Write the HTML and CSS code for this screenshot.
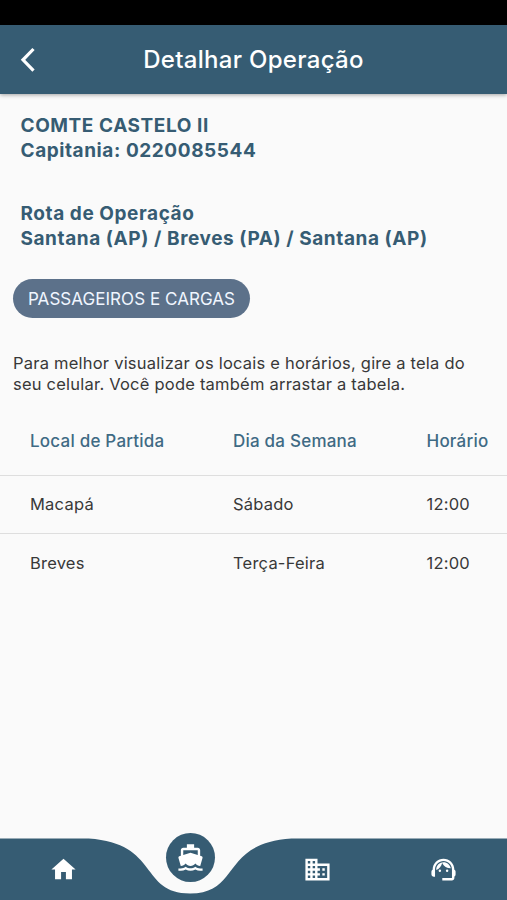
FILE: index.html
```html
<!DOCTYPE html>
<html lang="pt-BR">
<head>
    <meta charset="utf-8">
    <title>Detalhar Operação</title>
    <link rel="stylesheet" href="styles.css">
</head>
<body>
    <div class="status-bar"></div>
    <header class="app-bar">
        <svg class="back" viewBox="0 0 16 26"><path d="M13.5 2 L3 12.8 L13.5 23.6"/></svg>
        <h1>Detalhar Operação</h1>
    </header>
    <main>
        <section class="info">
            <p>COMTE CASTELO II</p>
            <p>Capitania: 0220085544</p>
        </section>
        <section class="info route">
            <p>Rota de Operação</p>
            <p>Santana (AP) / Breves (PA) / Santana (AP)</p>
        </section>
        <div class="chip">PASSAGEIROS E CARGAS</div>
        <p class="hint">Para melhor visualizar os locais e horários, gire a tela do<br>seu celular. Você pode também arrastar a tabela.</p>
        <table>
            <thead>
                <tr><th>Local de Partida</th><th>Dia da Semana</th><th>Horário</th></tr>
            </thead>
            <tbody>
                <tr><td>Macapá</td><td>Sábado</td><td>12:00</td></tr>
                <tr><td>Breves</td><td>Terça-Feira</td><td>12:00</td></tr>
            </tbody>
        </table>
    </main>
    <nav class="bottom-nav">
        <svg class="nav-shape" viewBox="0 0 507 62">
            <path d="M0 .5H88.7C159.7 5.1 139.4 55.5 190.1 55.5S220.5 5.1 291.5 .5H507V62H0Z"/>
        </svg>
        <a href="#"><svg viewBox="0 0 24 24"><path d="M10 20v-6h4v6h5v-8h3L12 3 2 12h3v8z"/></svg></a>
        <a href="#" class="active"><svg viewBox="0 0 24 24"><path d="M20 21c-1.39 0-2.78-.47-4-1.32-2.44 1.71-5.56 1.71-8 0C6.78 20.53 5.39 21 4 21H2v2h2c1.38 0 2.74-.35 4-.99 2.52 1.29 5.48 1.29 8 0 1.26.65 2.62.99 4 .99h2v-2h-2zM3.95 19H4c1.6 0 3.02-.88 4-2 .98 1.12 2.4 2 4 2s3.02-.88 4-2c.98 1.12 2.4 2 4 2h.05l1.89-6.68c.08-.26.06-.54-.06-.78s-.34-.42-.6-.5L20 10.62V6c0-1.1-.9-2-2-2h-3V1H9v3H6c-1.1 0-2 .9-2 2v4.62l-1.29.42c-.26.08-.48.26-.6.5s-.15.52-.06.78L3.95 19zM6 6h12v3.97L12 8 6 9.97V6z"/></svg></a>
        <a href="#"><svg viewBox="0 0 24 24"><path d="M12 7V3H2v18h20V7H12zM6 19H4v-2h2v2zm0-4H4v-2h2v2zm0-4H4V9h2v2zm0-4H4V5h2v2zm4 12H8v-2h2v2zm0-4H8v-2h2v2zm0-4H8V9h2v2zm0-4H8V5h2v2zm10 12h-8v-2h2v-2h-2v-2h2v-2h-2V9h8v10zm-2-8h-2v2h2v-2zm0 4h-2v2h2v-2z"/></svg></a>
        <a href="#"><svg viewBox="0 0 24 24"><path d="M21 12.22C21 6.73 16.74 3 12 3c-4.69 0-9 3.65-9 9.28-.6.34-1 .98-1 1.72v2c0 1.1.9 2 2 2h1v-6.1c0-3.87 3.13-7 7-7s7 3.13 7 7V19h-8v2h8c1.1 0 2-.9 2-2v-1.22c.59-.31 1-.92 1-1.64v-2.3c0-.7-.41-1.31-1-1.62z"/><circle cx="9" cy="13" r="1"/><circle cx="15" cy="13" r="1"/><path d="M18 11.03C17.52 8.18 15.04 6 12.05 6c-3.03 0-6.29 2.51-6.03 6.45 2.47-1.01 4.33-3.21 4.86-5.89 1.31 2.63 4 4.44 7.12 4.47z"/></svg></a>
    </nav>
</body>
</html>
```
FILE: styles.css
```css
* {
    box-sizing: border-box;
}
body {
    display: flex;
    flex-direction: column;
    height: 100vh;
    margin: 0;
    overflow: hidden;
    font-family: Inter, "Liberation Sans", sans-serif;
    background-color: #fafafa;
    color: #383838;
}
h1,
p {
    margin: 0;
}
.status-bar {
    height: 25px;
    background: #000;
}
.app-bar {
    display: grid;
    grid-template-columns: 56px 1fr 56px;
    align-items: center;
    height: 69px;
    background: #365c73;
    color: #fff;
    box-shadow: 0 1px 4px rgba(0, 0, 0, 0.35);
}
.back {
    width: 16px;
    height: 26px;
    margin-left: 20px;
    fill: none;
    stroke: #fff;
    stroke-width: 3.2;
}
h1 {
    text-align: center;
    font-size: 24px;
    font-weight: 500;
    letter-spacing: 0.3px;
}
main {
    flex: 1;
    padding-top: 20px;
}
.info {
    padding-left: 20.5px;
    font-size: 19px;
    font-weight: 700;
    line-height: 24.5px;
    letter-spacing: 0.57px;
    white-space: nowrap;
    color: #365c73;
}
.route {
    margin-top: 39px;
}
.chip {
    display: flex;
    align-items: center;
    justify-content: center;
    width: 237px;
    height: 39px;
    margin: 28px 0 0 13px;
    border-radius: 20px;
    background: #5c718a;
    color: #f0f6ff;
    font-size: 17px;
    letter-spacing: 0.05px;
}
.hint {
    margin: 35px 0 0 13px;
    font-size: 16.5px;
    line-height: 21px;
    letter-spacing: 0.22px;
    white-space: nowrap;
}
table {
    width: 100%;
    margin-top: 11px;
    border-collapse: collapse;
    table-layout: fixed;
    font-size: 16.5px;
    letter-spacing: 0.22px;
}
th,
td {
    width: 203px;
    height: 58.5px;
    padding: 0 0 0 30px;
    text-align: left;
}
th:last-child,
td:last-child {
    width: 101px;
    padding-left: 20.5px;
}
th {
    height: 69px;
    padding-top: 1px;
    font-size: 17px;
    font-weight: 500;
    color: #3f6a84;
}
td {
    border-top: 1px solid #dedede;
}
.bottom-nav {
    position: relative;
    display: grid;
    grid-template-columns: repeat(4, 1fr);
    height: 62px;
}
.nav-shape {
    position: absolute;
    width: 100%;
    height: 62px;
    fill: #365c73;
}
.bottom-nav a {
    position: relative;
    display: flex;
    justify-content: center;
    padding: 17px 0 0 1px;
}
.bottom-nav a:last-child {
    padding-left: 0;
}
.bottom-nav a svg {
    width: 29px;
    height: 29px;
    fill: #fff;
}
.bottom-nav .active {
    top: -5px;
    align-items: center;
    justify-self: center;
    width: 49px;
    height: 49px;
    padding: 0;
    border-radius: 50%;
    background: #365c73;
}
```
